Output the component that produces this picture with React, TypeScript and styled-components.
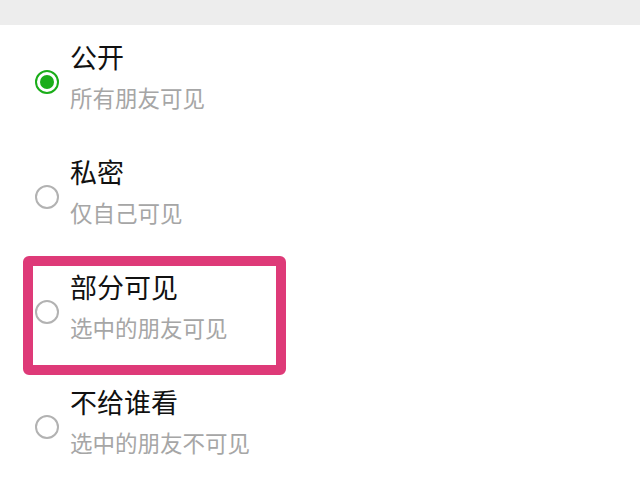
import React from "react";
import styled, { createGlobalStyle } from "styled-components";

const GlobalStyle = createGlobalStyle`
	html, body {
		margin: 0;
		padding: 0;
		background: #ffffff;
		font-family: "Noto Sans CJK SC", "Noto Sans", sans-serif;
	}
`;

const Page = styled.div`
	width: 640px;
	height: 481px;
	overflow: hidden;
	background: #ffffff;
`;

const TopBar = styled.div`
	height: 25px;
	background: #ededed;
`;

const List = styled.div`
	display: flex;
	flex-direction: column;
`;

const Row = styled.div`
	position: relative;
	display: flex;
	align-items: flex-start;
	height: 115px;
	box-sizing: border-box;
	padding: 15px 0 0 35px;
	gap: 11px;
`;

const Radio = styled.span<{ $checked?: boolean }>`
	flex: none;
	width: 24px;
	height: 24px;
	margin-top: 30px;
	box-sizing: border-box;
	border-radius: 50%;
	border: 2px solid ${(p) => (p.$checked ? "#1aad19" : "#b2b2b2")};
	display: flex;
	align-items: center;
	justify-content: center;

	&::after {
		content: "";
		display: ${(p) => (p.$checked ? "block" : "none")};
		width: 14px;
		height: 14px;
		border-radius: 50%;
		background: #1aad19;
	}
`;

const Texts = styled.div`
	display: flex;
	flex-direction: column;
	gap: 8px;
`;

const Title = styled.div`
	font-size: 27px;
	line-height: 34px;
	color: #111111;
`;

const Desc = styled.div`
	font-size: 22.5px;
	line-height: 30px;
	color: #a6a6a6;
`;

const Highlight = styled.div`
	position: absolute;
	top: 1px;
	left: 23px;
	width: 263px;
	height: 119px;
	box-sizing: border-box;
	border: 10px solid #de3a78;
	border-radius: 6px;
	pointer-events: none;
`;

const options = [
	{ title: "公开", desc: "所有朋友可见", checked: true },
	{ title: "私密", desc: "仅自己可见" },
	{ title: "部分可见", desc: "选中的朋友可见", marked: true },
	{ title: "不给谁看", desc: "选中的朋友不可见" },
];

export default function App() {
	return (
		<Page>
			<GlobalStyle />
			<TopBar />
			<List>
				{options.map((o) => (
					<Row key={o.title}>
						<Radio $checked={o.checked} />
						<Texts>
							<Title>{o.title}</Title>
							<Desc>{o.desc}</Desc>
						</Texts>
						{o.marked && <Highlight />}
					</Row>
				))}
			</List>
		</Page>
	);
}
